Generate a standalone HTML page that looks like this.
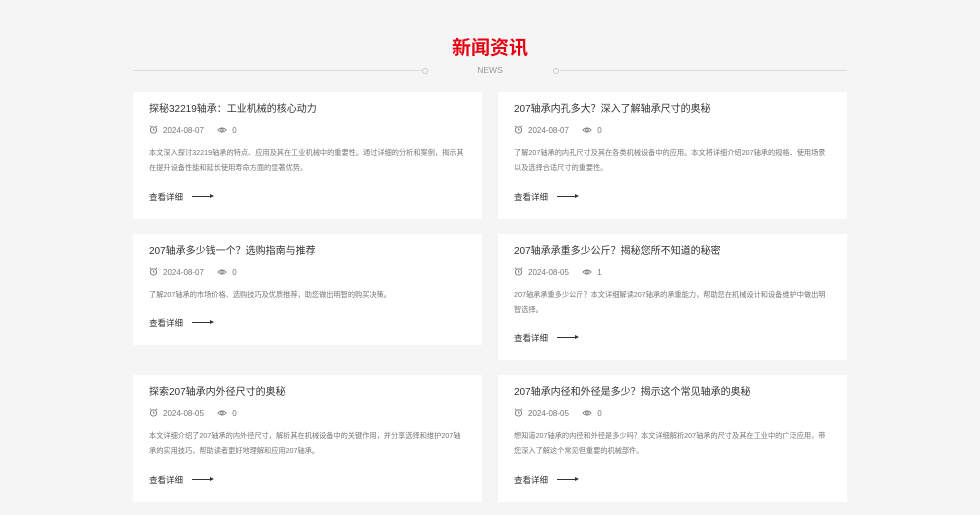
<!DOCTYPE html>
<html><head><meta charset="utf-8"><style>
*{margin:0;padding:0;box-sizing:border-box}
body{width:980px;height:515px;background:#f5f5f5;font-family:"Liberation Sans","Noto Sans CJK SC",sans-serif;position:relative;overflow:hidden}
.h{position:absolute;left:0;width:980px;top:37px;text-align:center;color:#e60012;font-size:19px;font-weight:bold;line-height:24px}
.news{position:absolute;left:0;width:980px;top:65px;text-align:center;color:#999;font-size:8.5px;line-height:11px}
.ln{position:absolute;top:70px;height:1px;background:#ddd}
.dot{position:absolute;top:67.5px;width:6px;height:6px;border:1px solid #ccc;border-radius:50%;background:#f5f5f5}
.c{position:absolute;background:#fff;width:349px;padding:0 16px}
.t{position:absolute;left:16px;top:11px;font-size:10px;color:#333;line-height:14px;white-space:nowrap}
.m{position:absolute;left:16px;top:33px;font-size:8px;color:#777;line-height:10px;white-space:nowrap}
.m svg{vertical-align:-1px;margin-right:5px}
.d{position:absolute;left:16px;top:53px;width:318px;font-size:7.2px;color:#777;line-height:15px}
.a{position:absolute;left:16px;font-size:8.5px;color:#333;line-height:10px;white-space:nowrap}
.a i{display:inline-block;width:20px;height:1px;background:#333;vertical-align:3px;margin-left:9px;position:relative}
.a i:after{content:"";position:absolute;right:-2px;top:-2px;border-left:4px solid #333;border-top:2.5px solid transparent;border-bottom:2.5px solid transparent}
</style></head><body>
<div class="h">新闻资讯</div>
<div class="news">NEWS</div>
<div class="ln" style="left:133px;width:290px"></div><div class="dot" style="left:422px"></div>
<div class="ln" style="left:560px;width:287px"></div><div class="dot" style="left:553px"></div>

<div class="c" style="left:133px;top:92px;height:127px">
<div class="t">探秘32219轴承：工业机械的核心动力</div>
<div class="m"><svg width="9" height="9" viewBox="0 0 10 10"><circle cx="5" cy="5.5" r="3.5" fill="none" stroke="#777"/><path d="M5 3.8V5.6H6.3M1 2L2.5 .8M9 2L7.5 .8" fill="none" stroke="#777"/></svg>2024-08-07 &nbsp; &nbsp; &nbsp;<svg width="10" height="8" viewBox="0 0 12 8"><path d="M1 4Q6 -1 11 4Q6 9 1 4Z" fill="none" stroke="#777"/><circle cx="6" cy="4" r="1.5" fill="none" stroke="#777"/></svg>0</div>
<div class="d">本文深入探讨32219轴承的特点、应用及其在工业机械中的重要性。通过详细的分析和案例，揭示其在提升设备性能和延长使用寿命方面的显著优势。</div>
<div class="a" style="top:100px">查看详细<i></i></div></div>

<div class="c" style="left:498px;top:92px;height:127px">
<div class="t">207轴承内孔多大？深入了解轴承尺寸的奥秘</div>
<div class="m"><svg width="9" height="9" viewBox="0 0 10 10"><circle cx="5" cy="5.5" r="3.5" fill="none" stroke="#777"/><path d="M5 3.8V5.6H6.3M1 2L2.5 .8M9 2L7.5 .8" fill="none" stroke="#777"/></svg>2024-08-07 &nbsp; &nbsp; &nbsp;<svg width="10" height="8" viewBox="0 0 12 8"><path d="M1 4Q6 -1 11 4Q6 9 1 4Z" fill="none" stroke="#777"/><circle cx="6" cy="4" r="1.5" fill="none" stroke="#777"/></svg>0</div>
<div class="d">了解207轴承的内孔尺寸及其在各类机械设备中的应用。本文将详细介绍207轴承的规格、使用场景以及选择合适尺寸的重要性。</div>
<div class="a" style="top:100px">查看详细<i></i></div></div>

<div class="c" style="left:133px;top:234px;height:111px">
<div class="t">207轴承多少钱一个？选购指南与推荐</div>
<div class="m"><svg width="9" height="9" viewBox="0 0 10 10"><circle cx="5" cy="5.5" r="3.5" fill="none" stroke="#777"/><path d="M5 3.8V5.6H6.3M1 2L2.5 .8M9 2L7.5 .8" fill="none" stroke="#777"/></svg>2024-08-07 &nbsp; &nbsp; &nbsp;<svg width="10" height="8" viewBox="0 0 12 8"><path d="M1 4Q6 -1 11 4Q6 9 1 4Z" fill="none" stroke="#777"/><circle cx="6" cy="4" r="1.5" fill="none" stroke="#777"/></svg>0</div>
<div class="d">了解207轴承的市场价格、选购技巧及优质推荐，助您做出明智的购买决策。</div>
<div class="a" style="top:84px">查看详细<i></i></div></div>

<div class="c" style="left:498px;top:234px;height:126px">
<div class="t">207轴承承重多少公斤？揭秘您所不知道的秘密</div>
<div class="m"><svg width="9" height="9" viewBox="0 0 10 10"><circle cx="5" cy="5.5" r="3.5" fill="none" stroke="#777"/><path d="M5 3.8V5.6H6.3M1 2L2.5 .8M9 2L7.5 .8" fill="none" stroke="#777"/></svg>2024-08-05 &nbsp; &nbsp; &nbsp;<svg width="10" height="8" viewBox="0 0 12 8"><path d="M1 4Q6 -1 11 4Q6 9 1 4Z" fill="none" stroke="#777"/><circle cx="6" cy="4" r="1.5" fill="none" stroke="#777"/></svg>1</div>
<div class="d">207轴承承重多少公斤？本文详细解读207轴承的承重能力，帮助您在机械设计和设备维护中做出明智选择。</div>
<div class="a" style="top:99px">查看详细<i></i></div></div>

<div class="c" style="left:133px;top:375px;height:127px">
<div class="t">探索207轴承内外径尺寸的奥秘</div>
<div class="m"><svg width="9" height="9" viewBox="0 0 10 10"><circle cx="5" cy="5.5" r="3.5" fill="none" stroke="#777"/><path d="M5 3.8V5.6H6.3M1 2L2.5 .8M9 2L7.5 .8" fill="none" stroke="#777"/></svg>2024-08-05 &nbsp; &nbsp; &nbsp;<svg width="10" height="8" viewBox="0 0 12 8"><path d="M1 4Q6 -1 11 4Q6 9 1 4Z" fill="none" stroke="#777"/><circle cx="6" cy="4" r="1.5" fill="none" stroke="#777"/></svg>0</div>
<div class="d">本文详细介绍了207轴承的内外径尺寸，解析其在机械设备中的关键作用，并分享选择和维护207轴承的实用技巧，帮助读者更好地理解和应用207轴承。</div>
<div class="a" style="top:100px">查看详细<i></i></div></div>

<div class="c" style="left:498px;top:375px;height:127px">
<div class="t">207轴承内径和外径是多少？揭示这个常见轴承的奥秘</div>
<div class="m"><svg width="9" height="9" viewBox="0 0 10 10"><circle cx="5" cy="5.5" r="3.5" fill="none" stroke="#777"/><path d="M5 3.8V5.6H6.3M1 2L2.5 .8M9 2L7.5 .8" fill="none" stroke="#777"/></svg>2024-08-05 &nbsp; &nbsp; &nbsp;<svg width="10" height="8" viewBox="0 0 12 8"><path d="M1 4Q6 -1 11 4Q6 9 1 4Z" fill="none" stroke="#777"/><circle cx="6" cy="4" r="1.5" fill="none" stroke="#777"/></svg>0</div>
<div class="d">想知道207轴承的内径和外径是多少吗？本文详细解析207轴承的尺寸及其在工业中的广泛应用，带您深入了解这个常见但重要的机械部件。</div>
<div class="a" style="top:100px">查看详细<i></i></div></div>
</body></html>
